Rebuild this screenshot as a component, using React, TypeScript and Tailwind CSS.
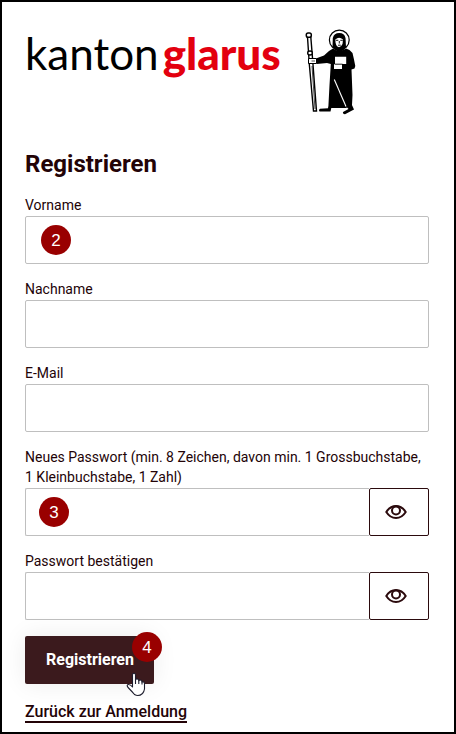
import { useState } from "react";

interface MarkerProps {
	step: number;
	className: string;
}

const Marker: React.FC<MarkerProps> = ({ step, className }) => (
	<span
		className={`absolute flex h-[30px] w-[30px] items-center justify-center rounded-full bg-[#990000] font-['Liberation_Sans',sans-serif] text-[17px] leading-none text-white pointer-events-none ${className}`}
	>
		{step}
	</span>
);

const FridolinIcon = () => (
	<svg
		width="54"
		height="88"
		viewBox="304 28 54 88"
		fill="#000"
		aria-hidden="true"
	>
		{/* halo and head */}
		<circle cx="338.3" cy="40" r="9.9" fill="#fff" stroke="#000" strokeWidth="1.2" />
		<path d="M331.500 47 L331.800 38 Q333 33 338.300 33 Q343.500 33 344.500 38 L345 47 Q342 52 338 51.500 Q334 51 331.500 47 Z" />
		<path d="M334.300 39.500 Q338 36 342 39.500 L341.500 44 Q340 47.300 338 47.300 Q335.500 46.800 334.600 43 Z" fill="#fff" />
		<path d="M334.800 40.300 H337.300 M339.300 40.300 H341.800 M338.300 41 V43.500 M337 45.200 H339.800" stroke="#000" strokeWidth="0.9" />
		{/* robe */}
		<path d="M332 48.500 Q338 53 345 48.500 L348.500 50 L351.500 53 Q353 59 354.300 66 L353.500 68.500 L350.500 69.500 L351.500 95 L351 105 L345 108 H327.300 L328.500 85 L329.800 64 L326 63 L315.700 64 L315.500 58.300 L323 55.500 L328 51 Z" />
		{/* book and hands */}
		<path d="M334 56.700 H345.200 V64 H341 V69 H333 V64 H334 Z" fill="#fff" />
		<path d="M333.500 64.200 H341.500" stroke="#000" strokeWidth="0.9" />
		{/* feet */}
		<path d="M328 106 L327 108.300 L319 108.800 Q317 110 318.500 111.500 H329.500 L330.500 107 Z" />
		<path d="M344 105 L347.500 109 L342 112 Q341.500 114 344 114.300 L353 109.500 L350.500 104 Z" />
		<path d="M333.300 79.500 L345 106.500" stroke="#fff" strokeWidth="1.1" />
		{/* staff */}
		<path d="M306.500 37 H309.800 L311.500 58 L315.500 111 H312.500 L308.300 64 Z" fill="#fff" stroke="#000" strokeWidth="1.4" />
		<path d="M311 66 L314 109" stroke="#000" strokeWidth="0.7" />
		<rect x="305.300" y="33" width="5" height="4.300" rx="1.800" fill="#fff" stroke="#000" strokeWidth="1.5" />
		<ellipse cx="309" cy="53" rx="2.300" ry="2" fill="#fff" stroke="#000" strokeWidth="1.4" />
		<path d="M307.500 58.500 H315.500 V63.500 H307.500 Z" fill="#fff" stroke="#000" strokeWidth="1" />
		<path d="M310.500 61 H314" stroke="#000" strokeWidth="0.7" />
	</svg>
);

const EyeIcon = () => (
	<svg
		width="22"
		height="16"
		viewBox="0 0 22 16"
		fill="none"
		stroke="#2b0a0d"
		strokeWidth="2"
		aria-hidden="true"
	>
		<path d="M1.300 8 C3.800 4 7 2 11 2 C15 2 18.200 4 20.700 8 C18.200 12 15 14 11 14 C7 14 3.800 12 1.300 8 Z" />
		<circle cx="11" cy="6.500" r="4" />
	</svg>
);

const HandCursor = () => (
	<svg
		className="absolute left-[101px] top-[36px] pointer-events-none"
		width="20"
		height="25"
		viewBox="0 0 20 25"
		fill="#fff"
		stroke="#1c1c2c"
		strokeWidth="1.1"
		strokeLinejoin="round"
		aria-hidden="true"
	>
		<path d="M6.500 15 V3 Q6.500 1.200 8 1.200 Q9.500 1.200 9.500 3 V8 Q10 6.500 11.500 7 Q12.800 7.300 12.800 8.800 Q13.500 7.500 15 8.200 Q16 8.700 16 10 Q18.500 9.300 18.500 12 V17 Q18 20 16.500 21.500 Q12.500 25 8.500 22.500 Q6 19.500 3 16.500 Q0 13.500 2 12.500 Q4.500 12.300 6.500 15 Z" />
		<path d="M9.500 7.500 V12 M12.800 8.500 V12 M16 9.500 V12.500" fill="none" />
	</svg>
);

const RegisterForm = () => {
	const [showPassword, setShowPassword] = useState<boolean>(false);
	const [showConfirm, setShowConfirm] = useState<boolean>(false);

	const textFields = [
		{ id: "vorname", label: "Vorname", type: "text", step: 2 },
		{ id: "nachname", label: "Nachname", type: "text" },
		{ id: "email", label: "E-Mail", type: "email" },
	];

	const passwordFields = [
		{
			id: "passwort",
			label: "Neues Passwort (min. 8 Zeichen, davon min. 1 Grossbuchstabe, 1 Kleinbuchstabe, 1 Zahl)",
			visible: showPassword,
			toggle: () => setShowPassword(!showPassword),
			step: 3,
		},
		{
			id: "bestaetigen",
			label: "Passwort bestätigen",
			visible: showConfirm,
			toggle: () => setShowConfirm(!showConfirm),
		},
	];

	return (
		<form
			className="flex flex-col gap-[15px]"
			onSubmit={(e) => e.preventDefault()}
		>
			{textFields.map(({ id, label, type, step }) => (
				<div key={id}>
					<label htmlFor={id} className="block pb-px text-sm">
						{label}
					</label>
					<div className="relative">
						<input
							id={id}
							type={type}
							className="block h-12 w-full rounded-xs border border-[#bfbfbf] px-4"
						/>
						{step && <Marker step={step} className="left-4 top-[9px]" />}
					</div>
				</div>
			))}
			{passwordFields.map(({ id, label, visible, toggle, step }) => (
				<div key={id}>
					<label htmlFor={id} className="block pb-px text-sm">
						{label}
					</label>
					<div className="relative flex">
						<input
							id={id}
							type={visible ? "text" : "password"}
							className="block h-12 min-w-0 flex-1 rounded-l-xs border border-r-0 border-[#bfbfbf] px-4"
						/>
						<button
							type="button"
							onClick={toggle}
							aria-pressed={visible}
							aria-label="Passwort anzeigen"
							className="flex h-12 w-[60px] items-center rounded-xs border border-[#2b0a0d] pl-[15px]"
						>
							<EyeIcon />
						</button>
						{step && <Marker step={step} className="left-[14px] top-[9px]" />}
					</div>
				</div>
			))}
			<div className="relative mt-px self-start">
				<button
					type="submit"
					className="h-12 rounded-xs bg-[#3b1a1d] pl-[21px] pr-5 font-bold text-white shadow-[0_0_24px_rgba(0,0,0,0.08)]"
				>
					Registrieren
				</button>
				<Marker step={4} className="-right-2 -top-1" />
				<HandCursor />
			</div>
		</form>
	);
};

const App = () => {
	return (
		<main className="min-h-screen border-2 border-black bg-white pb-2 pl-[23px] pr-[25px] pt-[26px] font-[Roboto,sans-serif] text-[#230307]">
			<header className="flex items-start gap-6">
				<div className="flex gap-1 whitespace-nowrap font-[Lato,sans-serif] text-[44px] leading-[50px] text-black">
					<span>kanton</span>
					<span className="font-black text-[#e3000f]">glarus</span>
				</div>
				<FridolinIcon />
			</header>
			<h1 className="mb-[15px] mt-8 text-2xl font-bold">Registrieren</h1>
			<RegisterForm />
			<a
				href="#anmeldung"
				className="mt-[19px] block w-fit border-b-2 border-[#230307] font-medium leading-[18px]"
			>
				Zurück zur Anmeldung
			</a>
		</main>
	);
};

export default App;
